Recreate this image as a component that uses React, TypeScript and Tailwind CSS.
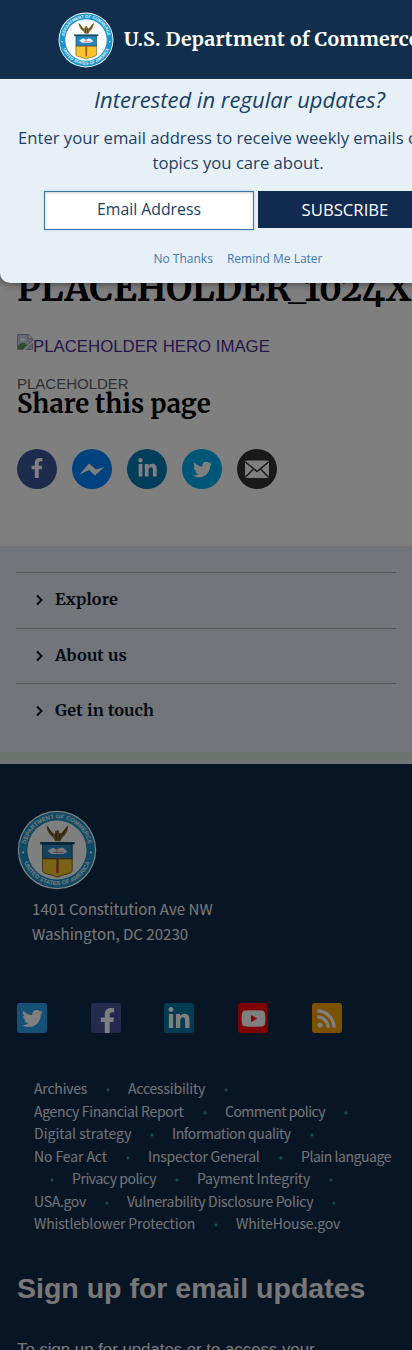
import React from "react";
import { FaTwitter, FaFacebookF, FaLinkedinIn, FaYoutube, FaRss } from "react-icons/fa";

const serif = "font-['Merriweather','DejaVu_Serif_Condensed','DejaVu_Serif',serif] font-bold [font-stretch:condensed]";
const sourceSans = "font-['Source_Sans_Pro','Noto_Sans_CJK_SC',sans-serif]";
const arial = "font-['Liberation_Sans',Arial,sans-serif]";
const openSans = "font-['Open_Sans',sans-serif]";

function Seal({ className, id }: { className: string; id: string }) {
  return (
    <svg viewBox="0 0 100 100" className={className}>
      <defs>
        <path id={`${id}-top`} d="M10.5 50a39.5 39.5 0 0 1 79 0" />
        <path id={`${id}-bottom`} d="M6 50a44 44 0 0 0 88 0" />
      </defs>
      <circle cx="50" cy="50" r="49" fill="#fff" />
      <circle cx="50" cy="50" r="47.5" fill="#1c94c8" />
      <circle cx="50" cy="50" r="37" fill="#fff" />
      <g fill="#e4f5fd" fontFamily="Liberation Sans" fontWeight="700" fontSize="7.4">
        <text textAnchor="middle"><textPath href={`#${id}-top`} startOffset="50%">DEPARTMENT OF COMMERCE</textPath></text>
        <text textAnchor="middle"><textPath href={`#${id}-bottom`} startOffset="50%">UNITED STATES OF AMERICA</textPath></text>
      </g>
      <circle cx="7.5" cy="53" r="1.3" fill="#fff" />
      <circle cx="92.5" cy="53" r="1.3" fill="#fff" />
      <path d="M37 19c0 8 4 12 8 15l3 5h6l3-5c4-3 7-8 7-15l-8 9-3 2-1-5-4 1-1 4-3-2z" fill="#876e35" />
      <path d="M38 21l7 11M63 21l-7 11M49 29v8M53 29v8" stroke="#443313" strokeWidth="1.2" />
      <path d="M29 40h43v3H29z" fill="#124e72" />
      <path d="M32 43h37v18H32z" fill="#2687bd" stroke="#17394d" strokeWidth="1" />
      <path d="M38 51l7-4 3 2 9-2 6 5-5 3H43z" fill="#eef4f6" />
      <path d="M46 53h12M50 48v4" stroke="#b45352" strokeWidth="1" />
      <path d="M32 61h37v15c0 4-10 4-18.500 8-8.500-4-18.500-4-18.500-8z" fill="#f7c42b" stroke="#594719" strokeWidth="1" />
      <path d="M50.500 61v18" stroke="#c14635" strokeWidth="3" />
      <path d="M49 63h3v7h-3z" fill="#92752b" />
    </svg>
  );
}

function BrokenImage() {
  return (
    <svg viewBox="0 0 16 16" className="block size-4 shrink-0">
      <path d="M.5.500h11l4 4v2L6 15.500H.500z" fill="#c2d0ea" stroke="#a1a1a1" />
      <path d="M11 .500v4h4.500" fill="#fff" stroke="#a1a1a1" />
      <path d="M3 6c0-2 3-3 4-1 2 0 2 2 1 2H3z" fill="#fff" />
      <path d="M1 15v-3c3-4 6-4 9-1l-4 4z" fill="#5c9a60" />
      <path d="M15.500 9v6.500H9z" fill="#c2d0ea" stroke="#a1a1a1" />
    </svg>
  );
}

function Messenger() {
  return (
    <svg viewBox="0 0 40 40" className="size-10">
      <path d="M7.500 25.500L17 14.500l7 6 8.500-2.500L23 26.500l-6-5.500z" fill="#fff" />
    </svg>
  );
}

function Mail() {
  return (
    <svg viewBox="0 0 40 40" className="size-10">
      <rect x="8" y="11.500" width="24" height="17.500" rx="2" fill="#fff" />
      <path d="M8.500 13L20 22.500 31.500 13M8.500 28l8-8M31.500 28l-8-8" fill="none" stroke="#333" strokeWidth="1.500" />
    </svg>
  );
}

const shares = [
  { name: "Facebook", bg: "bg-[#3b5998]", icon: <FaFacebookF className="mb-0.5 size-[20px]" /> },
  { name: "Messenger", bg: "bg-[#0084ff]", icon: <Messenger /> },
  { name: "LinkedIn", bg: "bg-[#007bb5]", icon: <FaLinkedinIn className="mb-0.5 size-[21px]" /> },
  { name: "Twitter", bg: "bg-[#00aced]", icon: <FaTwitter className="size-[19px]" /> },
  { name: "Email", bg: "bg-[#333333]", icon: <Mail /> },
];

const socials = [
  { name: "Twitter", bg: "bg-[#2aa3ef]", icon: <FaTwitter className="size-[21px]" /> },
  { name: "Facebook", bg: "bg-[#46549a]", icon: <FaFacebookF className="ml-1 mt-1 size-[25px]" /> },
  { name: "LinkedIn", bg: "bg-[#0077a5]", icon: <FaLinkedinIn className="mt-0.5 size-[24px]" /> },
  { name: "YouTube", bg: "bg-[#ff0000]", icon: <FaYoutube className="size-[25px]" /> },
  { name: "RSS", bg: "bg-[#f6a100]", icon: <FaRss className="size-[21px]" /> },
];

const linkRows: [string, string][][] = [
  [["Archives", "w-[53px] tracking-[-0.2px]"], ["Accessibility", "w-[77px] tracking-[-0.2px]"], ["", ""]],
  [["Agency Financial Report", "w-[150px] tracking-[-0.330px]"], ["Comment policy", "w-[100px] tracking-[-0.550px]"], ["", ""]],
  [["Digital strategy", "w-[97px]"], ["Information quality", "w-[119px] tracking-[-0.400px]"], ["", ""]],
  [["No Fear Act", "w-[73px] tracking-[-0.100px]"], ["Inspector General", "w-[112px] tracking-[-0.220px]"], ["Plain language", "w-[90px] tracking-[-0.450px]"]],
  [["", "-ml-[3px]"], ["Privacy policy", "w-[84px] tracking-[-0.430px]"], ["Payment Integrity", "w-[113px] tracking-[-0.180px]"], ["", ""]],
  [["USA.gov", "w-[52px] tracking-[-0.300px]"], ["Vulnerability Disclosure Policy", "w-[186px] tracking-[-0.300px]"], ["", ""]],
  [["Whistleblower Protection", "w-[161px] tracking-[-0.150px]"], ["WhiteHouse.gov", "w-[104px] tracking-[-0.150px]"]],
];

function SubscribeDialog() {
  return (
    <section className={`absolute left-0 top-[79px] flex h-[204px] w-[476px] flex-col items-center rounded-b-[10px] bg-[#e7f0f7] text-[#112e51] shadow-[0_0_8px_rgba(0,0,0,0.6)] ${openSans}`}>
      <h2 className="mt-[5px] pl-[3px] text-[22px] italic leading-[30px] tracking-[0.02px] text-[#174067]">Interested in regular updates?</h2>
      <p className="mt-[11px] whitespace-nowrap text-center text-[16.650px] leading-[25px] text-[#1d4067]">
        Enter your email address to receive weekly emails on the
        <br />
        topics you care about.
      </p>
      <div className="mt-[16px] flex items-start gap-1 self-start pl-[44px]">
        <div className="flex h-[39px] w-[210px] items-center justify-center border border-[#4474a4] bg-white pb-px text-[15.800px] text-[#174067] shadow-[inset_0_1px_3px_#ccc,0_0_2px_#9ecaed]">Email Address</div>
        <div className="flex h-[37px] w-[174px] items-center justify-center bg-[#112a50] text-[16.700px] text-white">SUBSCRIBE</div>
      </div>
      <div className="mt-[20px] flex gap-[14px] text-[12px] leading-[18px] text-[#3f78ad]">
        <span>No Thanks</span>
        <span>Remind Me Later</span>
      </div>
    </section>
  );
}

export default function App() {
  return (
    <div className="relative h-[1350px] w-[412px] overflow-hidden bg-white">
      <header className="relative z-10 flex h-[79px] items-center overflow-hidden bg-[#112e4d] pl-[58px]">
        <Seal id="header" className="size-[56px] shrink-0" />
        <span className={`ml-[10px] whitespace-nowrap pt-px text-[19.500px] tracking-[0.250px] text-white ${serif}`}>U.S. Department of Commerce</span>
      </header>
      <main className="h-[467px] pl-[17px]">
        <h1 className={`whitespace-nowrap pt-[185px] text-[36px] leading-[50px] text-black [font-feature-settings:'onum'] ${serif}`}>PLACEHOLDER_1024X</h1>
        <div className={`mt-[20px] flex h-[24px] text-[16.800px] leading-[25px] text-[#4c2c92] ${arial}`}>
          <BrokenImage />
          <span className="whitespace-nowrap">PLACEHOLDER HERO IMAGE</span>
        </div>
        <p className={`mt-[16px] text-[15px] leading-[20px] text-[#5b616b] ${arial}`}>PLACEHOLDER</p>
        <h2 className={`-mt-[6px] text-[25.600px] leading-[32px] text-black ${serif}`}>Share this page</h2>
        <div className="mt-[29px] flex gap-[15px] text-white">
          {shares.map((s) => (
            <span key={s.name} aria-label={s.name} className={`flex size-10 items-center justify-center rounded-full ${s.bg}`}>{s.icon}</span>
          ))}
        </div>
      </main>
      <nav className="flex h-[218px] flex-col bg-[#e4ecf6] pt-[26px] text-[#0a1528]">
        <div className="grow px-4">
          {["Explore", "About us", "Get in touch"].map((item) => (
            <div key={item} className={`flex h-[55.500px] items-center border-t border-[#aeb0b5] pl-[19px] text-[16.300px] tracking-[0.150px] ${serif}`}>
              <svg viewBox="0 0 8 12" className="mr-[11px] h-3 w-[9px]"><path d="M1.500 1.500L6 6l-4.500 4.500" fill="none" stroke="currentColor" strokeWidth="2" /></svg>
              <span className="pb-0.5">{item}</span>
            </div>
          ))}
        </div>
        <div className="h-[12px] bg-linear-to-b from-[#d9ead9] from-50% to-[#dceaf3]" />
      </nav>
      <footer className="h-[586px] bg-[#112b4a] pl-[17px] pt-[46px]">
        <Seal id="footer" className="size-[80px]" />
        <address className={`ml-[15px] mt-[6px] text-[15.100px] not-italic leading-[25px] text-[#f1f1f1] ${sourceSans}`}>
          1401 Constitution Ave NW<br />Washington, DC 20230
        </address>
        <div className="mt-[57px] flex gap-[43.700px] text-white">
          {socials.map((s) => (
            <span key={s.name} aria-label={s.name} className={`flex size-[30px] items-center justify-center overflow-hidden rounded-[3px] ${s.bg}`}>{s.icon}</span>
          ))}
        </div>
        <div className={`mt-[44px] pl-[17px] text-[14px] text-[#e1e7ee] ${sourceSans}`}>
          {linkRows.map((row, i) => (
            <div key={i} className="flex h-[22.500px] items-center whitespace-nowrap leading-[22.500px]">
              {row.map(([item, fit], j) => (
                <React.Fragment key={j}>
                  {j > 0 && <span className="flex w-[41px] shrink-0 justify-center text-[#35929f]"><svg viewBox="0 0 4 4" className="mt-1 size-1"><path d="M2 0l2 2-2 2-2-2z" fill="currentColor" /></svg></span>}
                  <a className={`shrink-0 ${fit}`}>{item}</a>
                </React.Fragment>
              ))}
            </div>
          ))}
        </div>
        <h2 className={`mt-[34px] whitespace-nowrap text-[28.500px] font-bold leading-[38px] text-[#f1f1f1] ${arial}`}>Sign up for email updates</h2>
        <p className={`mt-[30px] text-[16.800px] leading-[25px] text-[#f1f1f1] ${arial}`}>To sign up for updates or to access your</p>
      </footer>
      <div className="absolute inset-x-0 bottom-0 top-[79px] bg-black/50" />
      <SubscribeDialog />
    </div>
  );
}
